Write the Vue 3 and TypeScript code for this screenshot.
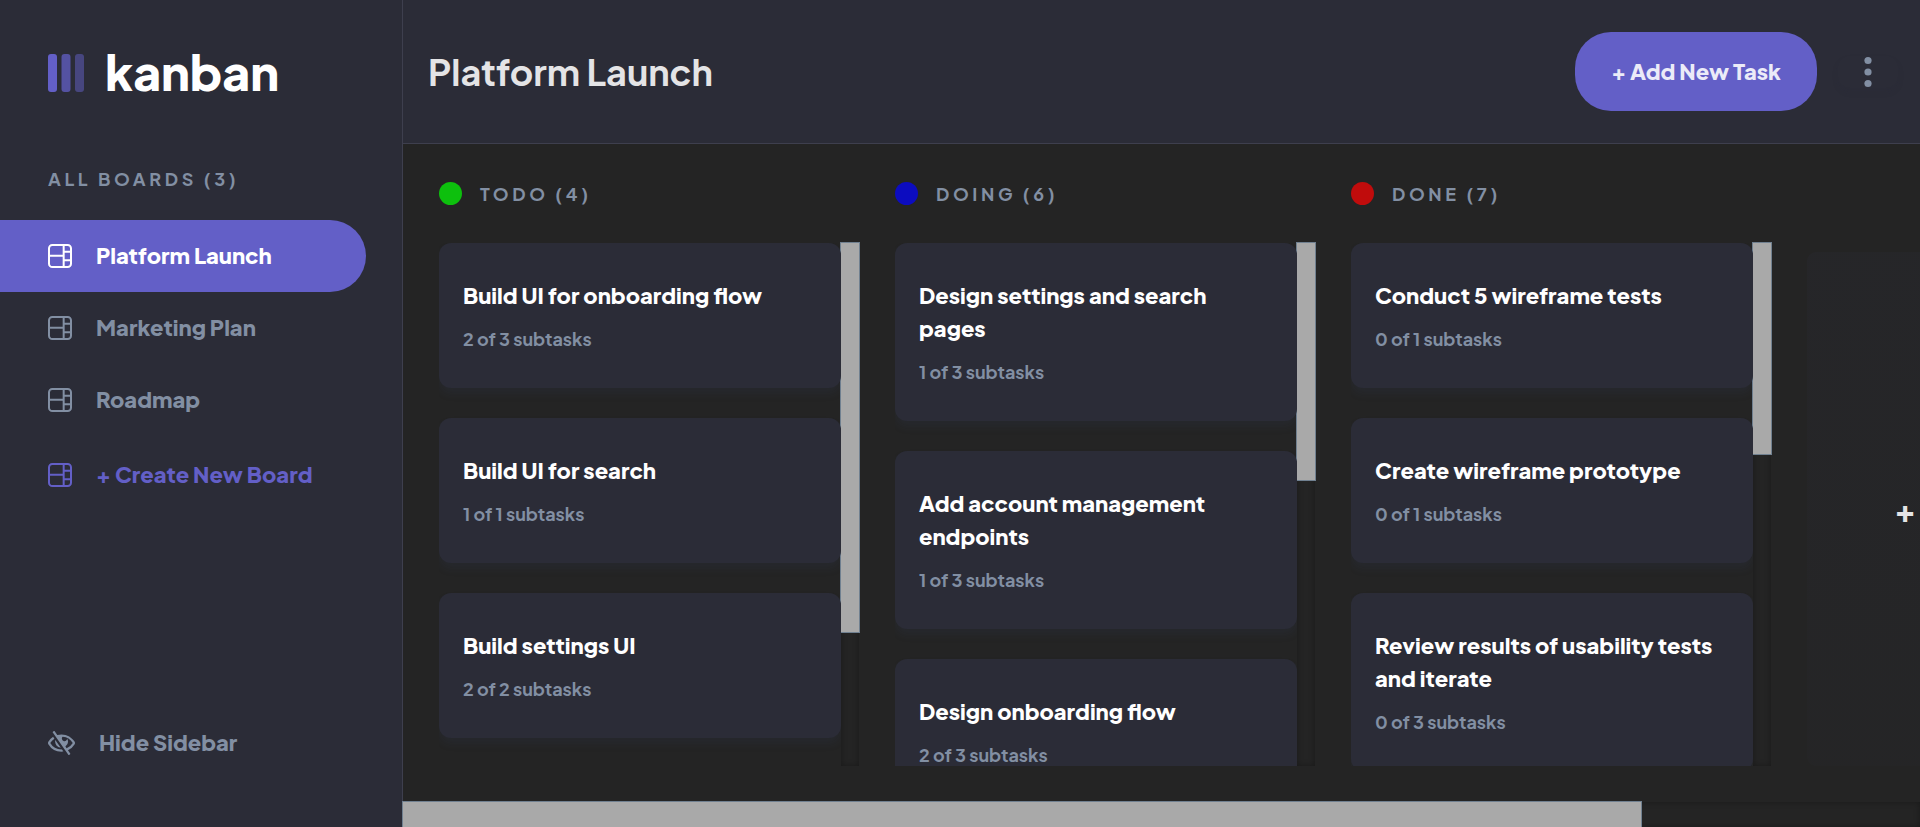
<script setup lang="ts">
import { ref } from 'vue'

interface Task {
  title: string
  done: number
  total: number
}

interface Column {
  name: string
  count: number
  tone: 'green' | 'blue' | 'red'
  thumb: number
  tasks: Task[]
}

const boards = ['Platform Launch', 'Marketing Plan', 'Roadmap']
const active = ref(boards[0])

const columns: Column[] = [
  {
    name: 'TODO',
    count: 4,
    tone: 'green',
    thumb: 74.4,
    tasks: [
      { title: 'Build UI for onboarding flow', done: 2, total: 3 },
      { title: 'Build UI for search', done: 1, total: 1 },
      { title: 'Build settings UI', done: 2, total: 2 },
    ],
  },
  {
    name: 'DOING',
    count: 6,
    tone: 'blue',
    thumb: 45.3,
    tasks: [
      { title: 'Design settings and search pages', done: 1, total: 3 },
      { title: 'Add account management endpoints', done: 1, total: 3 },
      { title: 'Design onboarding flow', done: 2, total: 3 },
    ],
  },
  {
    name: 'DONE',
    count: 7,
    tone: 'red',
    thumb: 40.4,
    tasks: [
      { title: 'Conduct 5 wireframe tests', done: 0, total: 1 },
      { title: 'Create wireframe prototype', done: 0, total: 1 },
      { title: 'Review results of usability tests and iterate', done: 0, total: 3 },
    ],
  },
]

const boardIcon =
  'M0 2.889A2.889 2.889 0 0 1 2.889 0H13.11A2.889 2.889 0 0 1 16 2.889V13.11A2.888 2.888 0 0 1 13.111 16H2.89A2.889 2.889 0 0 1 0 13.111V2.89Zm1.333 5.555v4.667c0 .859.697 1.556 1.556 1.556h6.889V8.444H1.333Zm8.445-1.333V1.333h-6.89A1.556 1.556 0 0 0 1.334 2.89V7.11h8.445Zm4.889-1.333H11.11v4.444h3.556V5.778Zm0 5.778H11.11v3.11h2a1.556 1.556 0 0 0 1.556-1.555v-1.555Zm0-7.112V2.89a1.555 1.555 0 0 0-1.556-1.556h-2v3.111h3.556Z'
const hideIcon =
  'M8.522 11.223a4.252 4.252 0 0 1-3.654-5.22l3.654 5.22ZM9 12.25A8.685 8.685 0 0 1 1.5 8a8.612 8.612 0 0 1 2.76-2.864l-.86-1.23A10.112 10.112 0 0 0 .208 7.238a1.5 1.5 0 0 0 0 1.524A10.187 10.187 0 0 0 9 13.75c.414 0 .828-.025 1.239-.074l-1-1.43A8.88 8.88 0 0 1 9 12.25Zm8.792-3.488a10.14 10.14 0 0 1-4.486 4.046l1.504 2.148a.375.375 0 0 1-.092.523l-.648.453a.375.375 0 0 1-.523-.092L3.19 1.044A.375.375 0 0 1 3.282.52L3.93.068a.375.375 0 0 1 .523.092l1.735 2.479A10.308 10.308 0 0 1 9 2.25c3.746 0 7.031 2 8.792 4.988a1.5 1.5 0 0 1 0 1.524ZM16.5 8a8.674 8.674 0 0 0-6.755-4.219A1.75 1.75 0 1 0 12.75 5v-.001a4.25 4.25 0 0 1-1.154 5.366l.834 1.192A8.641 8.641 0 0 0 16.5 8Z'
</script>

<template>
  <div class="app">
    <aside class="sidebar">
      <div class="logo">
        <svg width="36" height="38" viewBox="0 0 36 38" fill="#635fc7" aria-hidden="true">
          <rect width="9" height="38" rx="3" />
          <rect x="13.5" width="9" height="38" rx="3" opacity=".75" />
          <rect x="27" width="9" height="38" rx="3" opacity=".5" />
        </svg>
        <span class="wordmark">kanban</span>
      </div>

      <h2 class="label">ALL BOARDS ({{ boards.length }})</h2>
      <nav class="boards">
        <button
          v-for="board in boards"
          :key="board"
          type="button"
          class="board"
          :class="{ active: board === active }"
          @click="active = board"
        >
          <svg width="24" height="24" viewBox="0 0 16 16" fill="currentColor" aria-hidden="true">
            <path :d="boardIcon" />
          </svg>
          {{ board }}
        </button>
      </nav>
      <button type="button" class="board create">
        <svg width="24" height="24" viewBox="0 0 16 16" fill="currentColor" aria-hidden="true">
          <path :d="boardIcon" />
        </svg>
        + Create New Board
      </button>

      <button type="button" class="board hide">
        <svg width="27" height="24" viewBox="0 0 18 16" fill="currentColor" aria-hidden="true">
          <path :d="hideIcon" />
        </svg>
        Hide Sidebar
      </button>
    </aside>

    <div class="content">
      <header class="header">
        <h1 class="title">{{ active }}</h1>
        <button type="button" class="add">+ Add New Task</button>
        <button type="button" class="more" aria-label="Board options">
          <svg width="8" height="32" viewBox="0 0 8 32" fill="currentColor" aria-hidden="true">
            <circle cx="4" cy="4.5" r="3.6" />
            <circle cx="4" cy="16" r="3.6" />
            <circle cx="4" cy="27.5" r="3.6" />
          </svg>
        </button>
      </header>

      <main class="columns">
        <section v-for="column in columns" :key="column.name" class="column">
          <h2 class="label column-head">
            <span class="dot" :class="column.tone"></span>
            {{ column.name }} ({{ column.count }})
          </h2>
          <div class="scroller">
            <div class="list">
              <article v-for="task in column.tasks" :key="task.title" class="card">
                <h3 class="card-title">{{ task.title }}</h3>
                <p class="card-meta">{{ task.done }} of {{ task.total }} subtasks</p>
              </article>
            </div>
            <div class="track">
              <div class="thumb" :style="{ height: column.thumb + '%' }"></div>
            </div>
          </div>
        </section>
        <button type="button" class="new-column">+ New Column</button>
      </main>

      <div class="track bottom-track">
        <div class="thumb bottom-thumb"></div>
      </div>
    </div>
  </div>
</template>

<style>
body {
  margin: 0;
  background: #242424;
}
</style>

<style scoped>
.app {
  display: flex;
  height: 100vh;
  overflow: hidden;
  background: #242424;
  color: #fff;
  font-family: 'Plus Jakarta Sans', Inter, 'Open Sans', sans-serif;
}

h1,
h2,
h3,
p {
  margin: 0;
}

button {
  border: 0;
  padding: 0;
  background: none;
  color: inherit;
  font: inherit;
  cursor: pointer;
}

.sidebar {
  box-sizing: border-box;
  flex: 0 0 403px;
  display: flex;
  flex-direction: column;
  align-items: flex-start;
  padding: 43px 36px 48px 0;
  border-right: 1px solid #3e3f4e;
  background: #2b2c37;
}

.logo {
  display: flex;
  align-items: center;
  gap: 21px;
  margin-left: 48px;
}

.wordmark {
  padding-bottom: 2px;
  font-size: 48px;
  font-weight: 800;
  line-height: 58px;
}

.label {
  color: #828fa3;
  font-size: 18px;
  font-weight: 700;
  line-height: 24px;
  letter-spacing: 0.2em;
}

.sidebar > .label {
  margin: 64px 0 29px 48px;
}

.boards {
  align-self: stretch;
}

.board {
  box-sizing: border-box;
  display: flex;
  align-items: center;
  gap: 24px;
  width: 100%;
  height: 72px;
  padding: 0 0 1px 48px;
  border-radius: 0 36px 36px 0;
  color: #828fa3;
  font-size: 22px;
  font-weight: 800;
  line-height: 27px;
  white-space: nowrap;
}

.active {
  background: #635fc7;
  color: #fff;
}

.create {
  margin-top: 3px;
  color: #635fc7;
}

.hide {
  margin-top: auto;
}

.content {
  flex: 1;
  min-width: 0;
  display: flex;
  flex-direction: column;
}

.header {
  display: flex;
  align-items: center;
  padding: 32px 22px 32px 25px;
  border-bottom: 1px solid #3e3f4e;
  background: #2b2c37;
}

.title {
  flex: 1;
  color: #e4e4e6;
  font-size: 36px;
  font-weight: 700;
  line-height: 48px;
}

.add {
  height: 79px;
  padding: 0 36px;
  border-radius: 36px;
  background: #635fc7;
  color: #ebebf8;
  font-size: 22px;
  font-weight: 800;
  line-height: 27px;
}

.more {
  display: flex;
  justify-content: center;
  width: 60px;
  margin-left: 21px;
  border-radius: 12px;
  color: #828fa3;
  box-shadow: 0 4px 6px rgba(43, 44, 55, 0.1);
}

.columns {
  flex: 1;
  min-height: 0;
  display: flex;
  gap: 36px;
  padding: 36px;
  overflow: hidden;
}

.column {
  flex: 0 0 420px;
  display: flex;
  flex-direction: column;
}

.column-head {
  display: flex;
  align-items: center;
  gap: 18px;
  height: 27px;
  margin-bottom: 36px;
}

.dot {
  width: 23px;
  height: 23px;
  border-radius: 50%;
}

.green {
  background: #0dc00d;
}

.blue {
  background: #0c0cc0;
}

.red {
  background: #c00c0c;
}

.scroller {
  flex: 1;
  min-height: 0;
  display: flex;
}

.list {
  position: relative;
  z-index: 1;
  flex: 1;
  display: flex;
  flex-direction: column;
  gap: 30px;
  overflow: hidden;
}

.card {
  flex: none;
  padding: 36px 24px;
  border-radius: 12px;
  background: #2b2c37;
  box-shadow: 0 6px 9px rgba(54, 78, 126, 0.1);
}

.card-title {
  color: #fff;
  font-size: 22px;
  font-weight: 800;
  line-height: 33px;
}

.card-meta {
  margin-top: 13px;
  color: #828fa3;
  font-size: 18px;
  font-weight: 700;
  line-height: 27px;
}

.track {
  width: 18px;
  box-shadow: inset 0 0 6px rgba(0, 0, 0, 0.3);
}

.thumb {
  background: #a9a9a9;
  outline: 1px solid #708090;
}

.bottom-track {
  width: auto;
  height: 25px;
}

.bottom-thumb {
  width: 81.6%;
  height: 100%;
}

.new-column {
  flex: 0 0 402px;
  margin-top: 72px;
  border-radius: 9px;
  background: linear-gradient(rgba(43, 44, 55, 0.25), rgba(43, 44, 55, 0.12));
  color: #e4e4e6;
  font-size: 32px;
  font-weight: 800;
  white-space: nowrap;
}
</style>
